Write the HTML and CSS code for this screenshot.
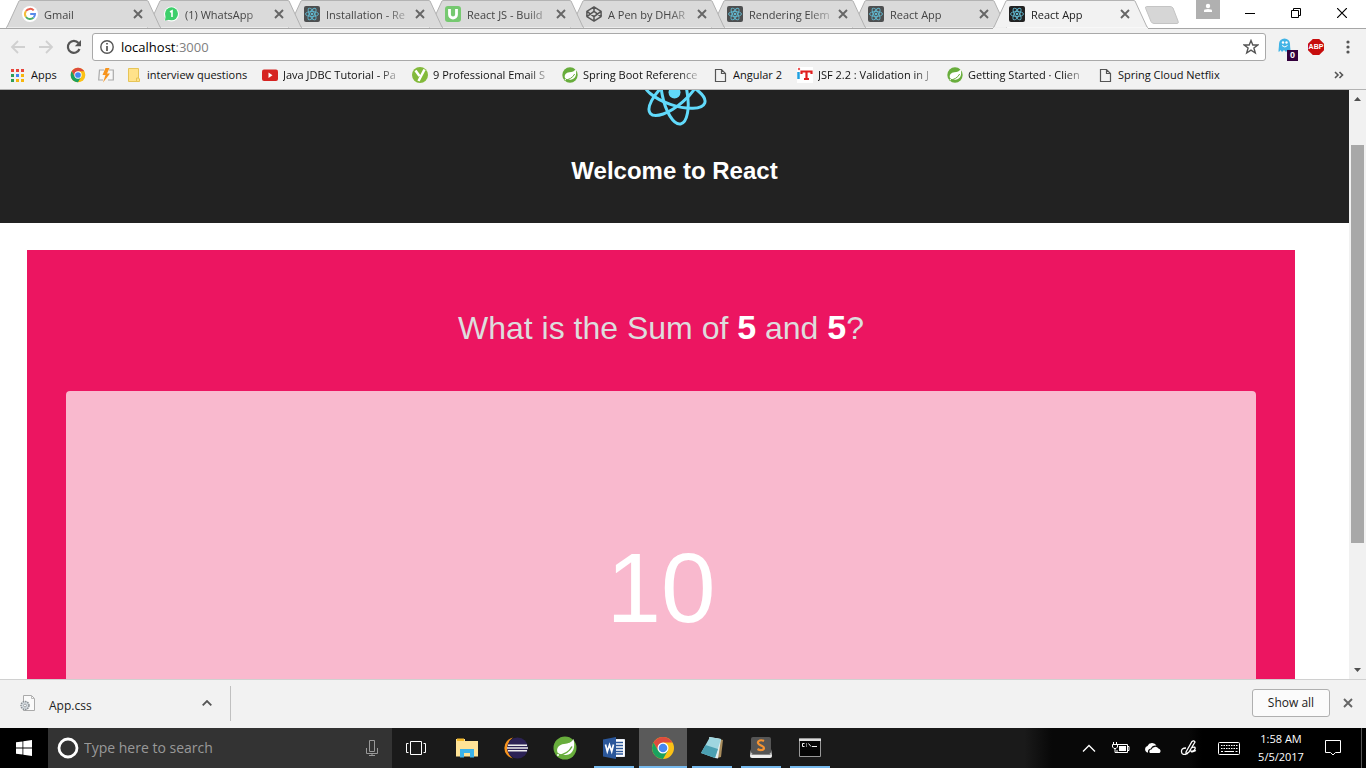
FILE: index.html
```html
<!DOCTYPE html>
<html lang="en">
<head>
<meta charset="utf-8">
<title>React App</title>
<link rel="stylesheet" href="styles.css">
</head>
<body>
<svg class="defs" aria-hidden="true">
  <symbol id="tab-shape" viewBox="0 0 155 29" preserveAspectRatio="none"><path d="M0 28.5 L1 28 L13 1 Q13.500 .5 15 .5 H140 Q141.500 .5 142 1 L154 28 L155 28.500"/></symbol>
  <symbol id="atom" viewBox="0 0 16 16"><rect width="16" height="16" rx="2" fill="var(--tile,#4d4f50)"/><g fill="none" stroke="#61b8cf" stroke-width=".9"><ellipse cx="8" cy="8" rx="6.500" ry="2.500"/><ellipse cx="8" cy="8" rx="6.500" ry="2.500" transform="rotate(60 8 8)"/><ellipse cx="8" cy="8" rx="6.500" ry="2.500" transform="rotate(120 8 8)"/></g><circle cx="8" cy="8" r="1.300" fill="#61b8cf"/></symbol>
  <symbol id="x" viewBox="0 0 10 10"><path d="M1 1 9 9M9 1 1 9" fill="none" stroke="#666" stroke-width="1.900"/></symbol>
  <symbol id="chrome" viewBox="0 0 24 24"><circle cx="12" cy="12" r="11" fill="#fbc116"/><path d="M2.500 6.500A11 11 0 0 1 21.500 6.500H12L7.200 14.700z" fill="#dd4b3e"/><path d="M2.500 6.500A11 11 0 0 0 12 23L16.800 14.700H7.200z" fill="#1aa15f"/><circle cx="12" cy="12" r="5.500" fill="#fff"/><circle cx="12" cy="12" r="4.300" fill="#4688f1"/></symbol>
  <symbol id="leaf" viewBox="0 0 24 24"><circle cx="12" cy="12" r="11.500" fill="#68ad3c"/><path d="M20.500 3C22.500 11 20.500 18.500 13 19 9 19.300 6.500 18 4.500 16.500 3 12 6 8.500 11 8 15.500 7.500 18.500 6.500 20.500 3z" fill="#fff"/><path d="M4 20C10 19 16 16.500 19 10.500" fill="none" stroke="#68ad3c" stroke-width="1.500"/><circle cx="5" cy="19" r="1" fill="#fff"/></symbol>
  <symbol id="page" viewBox="0 0 16 16"><path d="M3.500 2.500H9.500L13.500 6.500V14.500H3.500zM9.500 2.500V6.500H13.500" fill="none" stroke="#555" stroke-width="1.200"/></symbol>
</svg>

<header class="browser">
  <div class="strip">
    <nav class="tabs" aria-label="Tabs">
      <div class="tab"><svg class="shape"><use href="#tab-shape"/></svg><svg class="fav" viewBox="0 0 16 16"><circle cx="8" cy="8" r="8" fill="#fff"/><g fill="none" stroke-width="2"><path d="M4 5A5 5 0 0 1 11.700 4.400" stroke="#e8604f"/><path d="M4 11A5 5 0 0 1 4 5" stroke="#f5bd38"/><path d="M4 11A5 5 0 0 0 11.500 11.600" stroke="#4bae69"/><path d="M11.500 11.600A5 5 0 0 0 13 8H8.200" stroke="#588bea"/></g></svg><a class="title" href="#gmail">Gmail</a><button class="close" aria-label="Close tab"><svg viewBox="0 0 10 10"><use href="#x"/></svg></button></div>
      <div class="tab"><svg class="shape"><use href="#tab-shape"/></svg><svg class="fav" viewBox="0 0 16 16"><circle cx="8.500" cy="8" r="7.500" fill="#fff"/><path d="M1 15.500 2.500 11V5h5z" fill="#fff"/><circle cx="8.500" cy="7.800" r="6.500" fill="#3ecf6b"/><path d="M2 14.500 2.800 9.500 7 13.500z" fill="#3ecf6b"/><path d="M7 6 9 4.800V11" fill="none" stroke="#fff" stroke-width="1.600"/></svg><a class="title" href="#whatsapp">(1) WhatsApp</a><button class="close" aria-label="Close tab"><svg viewBox="0 0 10 10"><use href="#x"/></svg></button></div>
      <div class="tab"><svg class="shape"><use href="#tab-shape"/></svg><svg class="fav"><use href="#atom"/></svg><a class="title" href="#installation">Installation - Re</a><button class="close" aria-label="Close tab"><svg viewBox="0 0 10 10"><use href="#x"/></svg></button></div>
      <div class="tab"><svg class="shape"><use href="#tab-shape"/></svg><svg class="fav" viewBox="0 0 16 16"><rect width="16" height="16" rx="3" fill="#76c970"/><path d="M4.500 3V8.500A3.500 3.500 0 0 0 11.500 8.500V3" fill="none" stroke="#fff" stroke-width="2.800"/></svg><a class="title" href="#udemy">React JS - Build</a><button class="close" aria-label="Close tab"><svg viewBox="0 0 10 10"><use href="#x"/></svg></button></div>
      <div class="tab"><svg class="shape"><use href="#tab-shape"/></svg><svg class="fav" viewBox="0 0 16 16"><path d="M8 .9 15.100 5.400V10.600L8 15.100.9 10.600V5.400zM.9 5.400 8 10.600 15.100 5.400M.9 10.600 8 5.400 15.100 10.600M8 .9V5.400M8 10.600V15" fill="none" stroke="#555" stroke-width="1.500" stroke-linejoin="round"/></svg><a class="title" href="#pen">A Pen by DHAR</a><button class="close" aria-label="Close tab"><svg viewBox="0 0 10 10"><use href="#x"/></svg></button></div>
      <div class="tab"><svg class="shape"><use href="#tab-shape"/></svg><svg class="fav"><use href="#atom"/></svg><a class="title" href="#rendering">Rendering Elem</a><button class="close" aria-label="Close tab"><svg viewBox="0 0 10 10"><use href="#x"/></svg></button></div>
      <div class="tab"><svg class="shape"><use href="#tab-shape"/></svg><svg class="fav"><use href="#atom"/></svg><a class="title" href="#app">React App</a><button class="close" aria-label="Close tab"><svg viewBox="0 0 10 10"><use href="#x"/></svg></button></div>
      <div class="tab active"><svg class="shape"><use href="#tab-shape"/></svg><svg class="fav"><use href="#atom"/></svg><a class="title" href="#current" aria-current="page">React App</a><button class="close" aria-label="Close tab"><svg viewBox="0 0 10 10"><use href="#x"/></svg></button></div>
    </nav>
    <button class="newtab" aria-label="New tab"><svg viewBox="0 0 34 18"><path d="M1.500 .5H25Q27 .5 28 2L33 15Q34 17.500 32 17.500H9Q7 17.500 6 15.500L.7 2.500Q0 .5 1.500 .5z" fill="#d6d6d6" stroke="#c4c4c4"/></svg></button>
    <div class="window">
      <button class="profile" aria-label="Profile"><svg viewBox="0 0 24 19"><circle cx="12" cy="6" r="2.200" fill="#fff"/><path d="M8 12V10.500Q8 9 12 9T16 10.500V12z" fill="#fff"/></svg></button>
      <button class="win" aria-label="Minimize"><svg viewBox="0 0 10 10"><path d="M0 5.500H10" stroke="#000"/></svg></button>
      <button class="win" aria-label="Restore"><svg viewBox="0 0 10 10"><path d="M.5 2.500H7.500V9.500H.5zM2.500 2.500V.5H9.500V7.500H7.500" fill="none" stroke="#000"/></svg></button>
      <button class="win" aria-label="Close"><svg viewBox="0 0 10 10"><path d="M0 0 10 10M10 0 0 10" stroke="#000" stroke-width="1.200"/></svg></button>
    </div>
  </div>

  <div class="toolbar">
    <button class="nav" aria-label="Back"><svg viewBox="0 0 16 16"><path d="M15 8H2M8 2 2 8 8 14" fill="none" stroke="#d0d0d0" stroke-width="1.800"/></svg></button>
    <button class="nav" aria-label="Forward"><svg viewBox="0 0 16 16"><path d="M1 8H14M8 2 14 8 8 14" fill="none" stroke="#d0d0d0" stroke-width="1.800"/></svg></button>
    <button class="nav" aria-label="Reload"><svg viewBox="0 0 16 16"><path d="M13.500 10A6 6 0 1 1 12.500 4" fill="none" stroke="#555" stroke-width="2.200"/><path d="M15 1V7.200H8.800z" fill="#555"/></svg></button>
    <div class="omnibox">
      <svg class="info" viewBox="0 0 14 14"><circle cx="7" cy="7" r="6.200" fill="none" stroke="#555" stroke-width="1.400"/><path d="M7 6V11M7 3V4.600" stroke="#555" stroke-width="1.700"/></svg>
      <div class="address" role="textbox" aria-label="Address" contenteditable="true" spellcheck="false">localhost<span class="port">:3000</span></div>
      <button class="star" aria-label="Bookmark this page"><svg viewBox="0 0 16 16"><path d="M8 1.500 9.800 6H14.800L10.900 9 12.300 14 8 11.200 3.700 14 5.100 9 1.200 6H6.200z" fill="none" stroke="#555" stroke-width="1.400"/></svg></button>
    </div>
    <button class="ext" aria-label="Ghostery"><svg viewBox="0 0 20 21"><path d="M1 15C0 15 1 11 1 7A5.500 5.500 0 0 1 12 7C12 11 13 13 12 14L10 13 8 15 6 13 4 15 2.500 13z" fill="#41b4e6"/><circle cx="5" cy="5.500" r="1.200" fill="#fff"/><circle cx="8.500" cy="5.500" r="1.200" fill="#fff"/><path d="M4 8.500Q7 11.500 9.500 8.500" fill="none" stroke="#fff"/></svg><span class="badge">0</span></button>
    <button class="abp" aria-label="Adblock Plus">ABP</button>
    <button class="more" aria-label="Menu"><svg viewBox="0 0 4 14"><circle cx="2" cy="2" r="1.600" fill="#555"/><circle cx="2" cy="7" r="1.600" fill="#555"/><circle cx="2" cy="12" r="1.600" fill="#555"/></svg></button>
  </div>

  <nav class="bookmarks" aria-label="Bookmarks">
    <a class="bm apps" href="#apps"><svg viewBox="0 0 16 16"><path d="M1 2H4V5H1zM6 2H9V5H6zM11 2H14V5H11z" fill="#e8453c"/><path d="M1 7H4V10H1zM1 12H4V15H1z" fill="#2f9e58"/><path d="M6 7H9V10H6z" fill="#4285f4"/><path d="M11 7H14V10H11zM6 12H9V15H6zM11 12H14V15H11z" fill="#f7b60c"/></svg><span>Apps</span></a>
    <a class="bm" href="#chrome-home" aria-label="Chrome"><svg><use href="#chrome"/></svg></a>
    <a class="bm" href="#bolt" aria-label="Tools"><svg viewBox="0 0 16 16"><path d="M6 3H1.500L.7 13H5M11 3H15.300V13H10" fill="#f7f7f7" stroke="#aaa" stroke-width="1.200"/><path d="M11.500 1H7.500L4.500 8H7.500L5 15.500 12 6.500H9z" fill="#f7941d"/></svg></a>
    <a class="bm folder" href="#interview"><svg viewBox="0 0 16 16"><path d="M2.500 1.500H12.500V11L13.500 12V14.500H2.500z" fill="#ffe28a" stroke="#e6c457"/><path d="M10.500 14V11H13" fill="none" stroke="#e6c457"/></svg><span>interview questions</span></a>
    <a class="bm long" href="#jdbc"><svg viewBox="0 0 16 16"><rect y="2.500" width="16" height="11.500" rx="2" fill="#d62422"/><path d="M6.500 5.500 10.500 8.200 6.500 11z" fill="#fff"/></svg><span>Java JDBC Tutorial - Pa</span></a>
    <a class="bm long" href="#email"><svg viewBox="0 0 16 16"><circle cx="8" cy="8" r="8" fill="#83ba3b"/><path d="M3.500 3.500 7.500 9M12.500 2.500 6.500 14" fill="none" stroke="#fff" stroke-width="2.500"/></svg><span>9 Professional Email S</span></a>
    <a class="bm long" href="#boot"><svg><use href="#leaf"/></svg><span>Spring Boot Reference</span></a>
    <a class="bm angular" href="#angular"><svg><use href="#page"/></svg><span>Angular 2</span></a>
    <a class="bm long" href="#jsf"><svg viewBox="0 0 16 16"><rect width="16" height="16" fill="#fff"/><path d="M1.500 5V12" stroke="#1fa0e0" stroke-width="2.500"/><circle cx="2" cy="2" r="1.200" fill="#e55"/><path d="M4.500 7V4.500H14.500V7M9.500 4.500V12M7 12H12" fill="none" stroke="#e01f1f" stroke-width="2.200"/></svg><span>JSF 2.2 : Validation in J</span></a>
    <a class="bm long" href="#client"><svg><use href="#leaf"/></svg><span>Getting Started · Clien</span></a>
    <a class="bm" href="#netflix"><svg><use href="#page"/></svg><span>Spring Cloud Netflix</span></a>
    <button class="overflow" aria-label="More bookmarks"><svg viewBox="0 0 10 8"><path d="M1 1 4 4 1 7M5.500 1 8.500 4 5.500 7" fill="none" stroke="#555" stroke-width="1.600"/></svg></button>
  </nav>
</header>

<div class="viewport">
  <main class="app">
    <div class="app-header">
      <svg class="logo" viewBox="0 0 80 80"><g fill="none" stroke="#61dafb" stroke-width="3"><ellipse cx="39.500" cy="40.500" rx="32" ry="12.500" transform="rotate(19 39.500 40.500)"/><ellipse cx="39.500" cy="40.500" rx="32" ry="12.500" transform="rotate(79 39.500 40.500)"/><ellipse cx="39.500" cy="40.500" rx="32" ry="12.500" transform="rotate(139 39.500 40.500)"/></g><circle cx="39.500" cy="40.500" r="6" fill="#61dafb"/></svg>
      <h2>Welcome to React</h2>
    </div>
    <section class="quiz">
      <label class="question" for="answer">What is the Sum of <strong>5</strong> and <strong>5</strong>?</label>
      <input class="answer" id="answer" type="text" value="10">
    </section>
  </main>
  <div class="scrollbar" aria-hidden="true">
    <svg viewBox="0 0 7 4"><path d="M0 4 3.500 0 7 4z" fill="#505050"/></svg>
    <div class="track"><div class="thumb"></div></div>
    <svg viewBox="0 0 7 4"><path d="M0 0 3.500 4 7 0z" fill="#505050"/></svg>
  </div>
</div>

<footer class="shelf">
  <div class="download">
    <svg class="file" viewBox="0 0 16 16"><path d="M3.500 .5H11.500L14.500 3.500V15.500H3.500z" fill="#fafafa" stroke="#aaa"/><path d="M11.500 .5V3.500H14.500" fill="none" stroke="#bbb"/><circle cx="5" cy="10.500" r="4" fill="#d5dbe0" stroke="#8a9095" stroke-width="1.500" stroke-dasharray="1.500 .8"/><circle cx="5" cy="10.500" r="1.400" fill="#fff" stroke="#8a9095" stroke-width=".8"/></svg>
    <a class="filename" href="#file">App.css</a>
    <button class="caret" aria-label="Download options"><svg viewBox="0 0 10 6"><path d="M.7 5.300 5 1 9.300 5.300" fill="none" stroke="#555" stroke-width="1.800"/></svg></button>
  </div>
  <button class="showall">Show all</button>
  <button class="close" aria-label="Close downloads"><svg viewBox="0 0 10 10"><use href="#x"/></svg></button>
</footer>

<div class="taskbar">
  <button class="start" aria-label="Start"><svg viewBox="0 0 16 16"><path d="M0 2.300 6.500 1.400V7.500H0zM7.300 1.300 16 0V7.500H7.300zM0 8.400H6.500V14.600L0 13.700zM7.300 8.400H16V16L7.300 14.700z" fill="#fff"/></svg></button>
  <div class="search">
    <svg class="cortana" viewBox="0 0 22 22"><circle cx="11" cy="11" r="9" fill="none" stroke="#fff" stroke-width="2.800"/></svg>
    <input type="text" placeholder="Type here to search" aria-label="Type here to search">
    <svg class="mic" viewBox="0 0 12 16"><path d="M3.500 .5H8.500V11.500H3.500zM.5 8V13.500H11.500V8M6 13.500V15.500M3 15.500H9" fill="none" stroke="#999"/></svg>
  </div>
  <div class="programs">
    <button class="prog" aria-label="Task view"><svg viewBox="0 0 24 24"><path d="M6.500 5.500H17.500V18.500H6.500zM4.500 7.500H2.500V16.500H4.500M19.500 7.500H21.500V16.500H19.500" fill="none" stroke="#fff"/></svg></button>
    <button class="prog" aria-label="File Explorer"><svg viewBox="0 0 24 24"><path d="M1 3H10V5H23V20.500H1z" fill="#ffe396"/><path d="M2 2.500H9V5H2z" fill="#f3b92c"/><path d="M5 21.500V13H19V21.500H15V17H9V21.500z" fill="#3bb3ea"/></svg></button>
    <button class="prog" aria-label="Eclipse"><svg viewBox="0 0 24 24"><path d="M9 1.500A10.700 10.700 0 0 0 9 22.500 13 13 0 0 1 9 1.500z" fill="#f7941e"/><circle cx="13.500" cy="12" r="10.500" fill="#2c2255"/><path d="M4 9.300H23M3 12H24M4 14.700H23" stroke="#eee" stroke-width="1.500"/></svg></button>
    <button class="prog" aria-label="Spring"><svg><use href="#leaf"/></svg></button>
    <button class="prog open" aria-label="Word"><svg viewBox="0 0 24 24"><path d="M13 3.500H22.500V20.500H13z" fill="#fff" stroke="#e8eef7"/><path d="M14 6.500H21M14 9.500H21M14 12.500H21M14 15.500H21M14 18H21" stroke="#2b579a" stroke-width="1.300"/><path d="M1 3.500 14 1V23L1 20.500z" fill="#2b579a"/><path d="M3.500 8.500 5.300 15.500 7.500 9 9.700 15.500 11.500 8.500" fill="none" stroke="#fff" stroke-width="1.700"/></svg></button>
    <button class="prog open current" aria-label="Chrome"><svg><use href="#chrome"/></svg></button>
    <button class="prog open" aria-label="Notepad++"><svg viewBox="0 0 24 24"><path d="M16 2 23 4 21 21 17 22z" fill="#a88c5c"/><path d="M9 1 21 3 18 22.500 15 22z" fill="#e4eef0"/><path d="M10 1 21 3 15 22 1 17z" fill="#9fd6e0"/><path d="M1 17 15 22 18 13 5.500 9z" fill="#4ba0b2"/></svg></button>
    <button class="prog open" aria-label="Sublime Text"><svg viewBox="0 0 24 24"><path d="M2 13H22L23 20Q23 22 21 22H3Q1 22 1 20z" fill="#eee"/><path d="M4 1H20Q22 1 22 3V16Q22 18 20 18H4Q2 18 2 16V3Q2 1 4 1z" fill="#555"/><path d="M2.500 18.500H21.500" stroke="#888"/><path d="M15 5C12 3.500 8.500 4.500 9 7S15 9.500 15 12 11 14.500 8.500 13" fill="none" stroke="#f59331" stroke-width="2.200"/></svg></button>
    <button class="prog open" aria-label="Command Prompt"><svg viewBox="0 0 24 24"><path d="M1.500 3H22.500V20.500H1.500z" fill="#050505" stroke="#999"/><path d="M1 2.500H23V5H1z" fill="#ddd"/><path d="M6.500 7.500H4.500V10.500H6.500M8.500 7.500V8.500M8.500 9.500V10.500M10.500 7.500 13 10.500M14 10.500H19" fill="none" stroke="#eee"/></svg></button>
  </div>
  <div class="tray">
    <button aria-label="Show hidden icons"><svg viewBox="0 0 24 16"><path d="M6 11.500 12 5.500 18 11.500" fill="none" stroke="#fff" stroke-width="1.300"/></svg></button>
    <button aria-label="Battery"><svg viewBox="0 0 24 16"><path d="M8 4.500H18.500V12.500H8V10M18.500 6.500H20V10.500H18.500" fill="none" stroke="#fff"/><path d="M10 6H17V11H10z" fill="#fff"/><path d="M4.500 2V4M7.500 2V4M3.500 4.500H8.500V7L7 8.500H5L3.500 7zM6 8.500V12.500H8" fill="none" stroke="#fff"/></svg></button>
    <button aria-label="OneDrive"><svg viewBox="0 0 24 16"><path d="M6 12.500A3.500 3.500 0 0 1 6.500 6 5 5 0 0 1 15.500 5.500Q11 5 10 8.500 6.500 9 7 12.500z" fill="#fff"/><path d="M9 13A2 2 0 0 1 10.500 9.500 4 4 0 0 1 17.500 8.500 2.500 2.500 0 0 1 18.500 13z" fill="#fff"/></svg></button>
    <button aria-label="Ink Workspace"><svg viewBox="0 0 24 16"><path d="M9 12 15 1.500Q17 0 18 2L12 12 9 14zM9 8Q4 8 4.500 12T11 13.500M14 8Q19 6 18 9T14 11Q14 13 19 10.500" fill="none" stroke="#fff" stroke-width="1.300"/></svg></button>
    <button class="keyboard" aria-label="Touch keyboard"><svg viewBox="0 0 24 16"><rect x="1.500" y="2.500" width="21" height="12" rx="1" fill="none" stroke="#fff"/><path d="M4 5.500H21M4 8.500H21" stroke="#fff" stroke-dasharray="1.500 1"/><path d="M4 11.500H6M7.500 11.500H17M18.500 11.500H20.500" stroke="#fff"/></svg></button>
    <div class="clock"><time>1:58 AM</time><time>5/5/2017</time></div>
    <button class="notify" aria-label="Notifications"><svg viewBox="0 0 24 16"><path d="M4.500 .5H19.500V12.500H14.500L12 15 9.500 12.500H4.500z" fill="none" stroke="#fff"/></svg></button>
    <button class="desktop" aria-label="Show desktop"></button>
  </div>
</div>
</body>
</html>
```

FILE: styles.css
```css
* { box-sizing: border-box; }

body {
  margin: 0;
  height: 100vh;
  display: flex;
  flex-direction: column;
  overflow: hidden;
  font: 11px/16px "Open Sans", "Noto Sans", sans-serif;
  color: #222;
  background: #fff;
}

button {
  border: 0;
  padding: 0;
  margin: 0;
  background: none;
  font: inherit;
  color: inherit;
  display: flex;
  align-items: center;
  justify-content: center;
  flex: none;
}

a { color: inherit; text-decoration: none; }
svg { display: block; flex: none; }
.defs { position: absolute; width: 0; height: 0; }

/* Browser chrome */
.browser { flex: none; background: #f2f2f2; border-bottom: 1px solid #b3b3b3; }

.strip {
  display: flex;
  height: 29px;
  padding-left: 6px;
  background: linear-gradient(#a6a6a6, #a6a6a6) bottom / 100% 1px no-repeat #fff;
}

.tabs { display: flex; flex: 0 1 1128px; min-width: 0; isolation: isolate; }

.tab {
  position: relative;
  flex: 1 1 0;
  min-width: 0;
  display: flex;
  align-items: center;
  height: 29px;
  padding: 0 14px 0 16px;
  margin-right: -14px;
  border-bottom: 1px solid #a6a6a6;
  color: #444;
}
.tab:nth-child(1) { z-index: 7; }
.tab:nth-child(2) { z-index: 6; }
.tab:nth-child(3) { z-index: 5; }
.tab:nth-child(4) { z-index: 4; }
.tab:nth-child(5) { z-index: 3; }
.tab:nth-child(6) { z-index: 2; }
.tab:nth-child(7) { z-index: 1; }
.tab.active { z-index: 8; border-color: #f2f2f2; color: #222; --tile: #222; }

.shape {
  position: absolute;
  inset: 0;
  width: 100%;
  height: 100%;
  fill: #dadada;
  stroke: #b0b0b0;
  z-index: -1;
}
.active .shape { fill: #f2f2f2; }

.fav { width: 16px; height: 16px; margin-right: 6px; }

.title {
  flex: 1;
  min-width: 0;
  padding-top: 1px;
  overflow: hidden;
  white-space: nowrap;
  mask-image: linear-gradient(to right, #000 60px, transparent 88px);
}

.close { width: 18px; height: 18px; }
.close svg { width: 10px; height: 10px; }

.newtab { width: 34px; margin-left: 11px; }
.newtab svg { width: 34px; height: 18px; }

.window { display: flex; margin-left: auto; }
.profile { width: 24px; height: 19px; background: #b0b0b0; margin-right: 7px; }
.profile svg { width: 24px; height: 19px; }
.win { width: 46px; height: 26px; }
.window { padding-right: 1px; }
.win svg { width: 10px; height: 10px; }

.toolbar { display: flex; align-items: center; height: 36px; padding: 0 16px 0 10px; }
.nav { width: 16px; height: 16px; margin-right: 12px; }
.nav:nth-child(3) { margin-right: 10px; }
.nav svg { width: 16px; height: 16px; }

.omnibox {
  flex: 1;
  display: flex;
  align-items: center;
  height: 28px;
  padding: 0 6px 0 7px;
  border: 1px solid #a9a9a9;
  border-radius: 3px;
  background: #fff;
}
.info { width: 14px; height: 14px; margin-right: 7px; }
.address { flex: 1; font-size: 13px; line-height: 18px; color: #000; outline: 0; }
.port { color: #808080; }
.star svg { width: 16px; height: 16px; }

.ext { position: relative; width: 20px; height: 21px; margin-left: 12px; }
.ext svg { width: 20px; height: 21px; }
.badge {
  position: absolute;
  right: 0;
  bottom: -3px;
  width: 11px;
  height: 11px;
  background: #33003c;
  color: #fff;
  font: bold 9px/11px "Liberation Sans", sans-serif;
  text-align: center;
}
.abp {
  width: 16px;
  height: 16px;
  margin: 0 22px 0 10px;
  background: #c70d0d;
  color: #fff;
  font: bold 7px/16px "Liberation Sans", sans-serif;
  clip-path: polygon(30% 0, 70% 0, 100% 30%, 100% 70%, 70% 100%, 30% 100%, 0 70%, 0 30%);
}
.more svg { width: 4px; height: 14px; }

.bookmarks { display: flex; align-items: center; gap: 12px; height: 24px; padding: 0 22px 4px 10px; color: #111; }
.bm { display: flex; align-items: center; gap: 5px; flex: none; white-space: nowrap; }
.bm svg { width: 16px; height: 16px; }
.bm span { flex: 1; min-width: 0; overflow: hidden; }
.apps { width: 48px; }
.folder { width: 124px; }
.long { width: 138px; }
.long span { mask-image: linear-gradient(to right, #000 96px, transparent 120px); }
.angular { width: 73px; }
.overflow { margin-left: auto; }
.overflow svg { width: 10px; height: 8px; }

/* Web page */
.viewport { flex: 1; min-height: 0; display: flex; overflow: hidden; }
.app {
  flex: 1;
  margin-top: -58px;
  font-family: "Liberation Sans", Arial, sans-serif;
}
.app-header { background: #222; padding: 20px; color: #fff; text-align: center; }
.logo { width: 80px; height: 80px; margin: 0 auto; }
.app-header h2 { margin: 25px 0 19px; font-size: 24px; line-height: 27px; }

.quiz {
  margin: 27px 54px 27px 27px;
  padding: 59px 39px;
  background: #ec1561;
  text-align: center;
}
.question { display: block; margin-bottom: 44px; font-size: 32px; line-height: 38px; color: #ddd; }
.question strong { font-size: 34px; line-height: 36px; color: #fff; }
.answer {
  display: block;
  width: 100%;
  padding: 140px 0;
  border: 0;
  border-radius: 4px;
  background: #f9b9ce;
  color: #fff;
  font: 98px/115px "Liberation Sans", Arial, sans-serif;
  text-align: center;
}

.scrollbar {
  width: 17px;
  flex: none;
  display: flex;
  flex-direction: column;
  align-items: center;
  padding: 7px 0;
  background: #f1f1f1;
}
.scrollbar svg { width: 7px; height: 4px; }
.track { flex: 1; width: 13px; padding: 44px 0 125px; display: flex; }
.thumb { flex: 1; background: #a8a8a8; }

/* Downloads */
.shelf {
  flex: none;
  display: flex;
  align-items: center;
  height: 49px;
  padding: 0 9px 2px 20px;
  border-top: 1px solid #d0d0d0;
  background: #f2f2f2;
}
.download { display: flex; align-items: center; width: 211px; height: 35px; padding-right: 18px; border-right: 1px solid #c0c0c0; }
.file { width: 16px; height: 16px; margin-right: 13px; }
.filename { flex: 1; font-size: 12px; padding-top: 6px; }
.caret svg { width: 10px; height: 6px; }
.showall {
  width: 78px;
  height: 28px;
  margin: 0 9px 0 auto;
  border: 1px solid #b0b0b0;
  border-radius: 3px;
  background: #fbfbfb;
  font-size: 12px;
}

/* Taskbar */
.taskbar {
  flex: none;
  display: flex;
  height: 40px;
  color: #fff;
  background: linear-gradient(to right, #1a1a1a 75%, #080808 77%, #080808 87%, #000 88%);
}
.start { width: 48px; background: #000; }
.start svg { width: 16px; height: 16px; }
.search { display: flex; align-items: center; width: 344px; padding: 0 14px 0 9px; background: #333; }
.cortana { width: 22px; height: 22px; margin-right: 5px; }
.search input {
  flex: 1;
  min-width: 0;
  padding: 0;
  border: 0;
  background: none;
  color: #fff;
  font: 14px/20px "Open Sans", "Noto Sans", sans-serif;
}
.search input::placeholder { color: #999; opacity: 1; }
.mic { width: 12px; height: 16px; }

.programs { display: flex; gap: 1px; }
.prog { position: relative; width: 48px; }
.prog:first-child { margin-right: 2px; }
.prog svg { width: 24px; height: 24px; }
.open::after { content: ""; position: absolute; left: 4px; right: 4px; bottom: 0; height: 2px; background: #76b9ed; }
.current { background: #5a5a5a; }
.current::after { left: 0; right: 0; }

.tray { display: flex; margin-left: auto; }
.tray button { width: 32px; }
.tray svg { width: 24px; height: 16px; }
.tray button:nth-child(4) { width: 40px; }
.tray .keyboard { width: 40px; }
.clock { display: flex; flex-direction: column; align-items: center; justify-content: center; width: 64px; line-height: 18px; }
.tray .notify { width: 40px; margin-right: 8px; }
.tray .desktop { width: 5px; border-left: 1px solid #555; }
```
